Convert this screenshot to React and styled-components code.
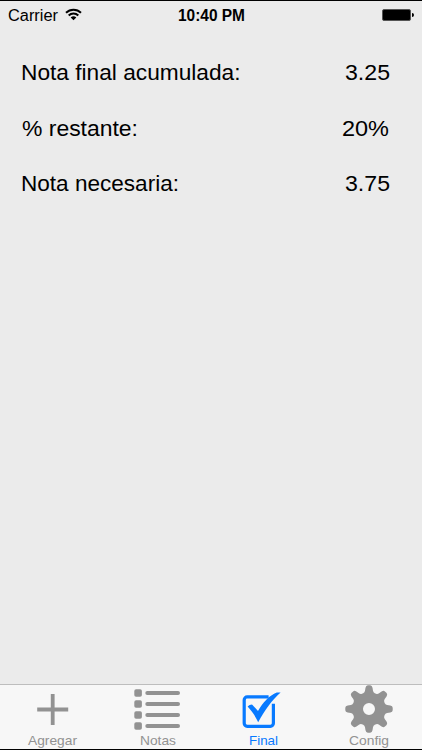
import React from "react";
import styled, { createGlobalStyle } from "styled-components";

const rows = [
  { label: "Nota final acumulada:", value: "3.25", labelWidth: 219.5, valueWidth: 45 },
  { label: "% restante:", value: "20%", labelWidth: 116, valueWidth: 47, inset: 1 },
  { label: "Nota necesaria:", value: "3.75", labelWidth: 158, valueWidth: 45 },
];

// one tooth with both flanks, turned eight times
const gearPath = () => {
  const parts = [];
  for (let i = 0; i < 8; i++) {
    const a = (i * Math.PI) / 4;
    const p = (x, y) =>
      `${(24 + x * Math.cos(a) - y * Math.sin(a)).toFixed(2)} ${(24 + x * Math.sin(a) + y * Math.cos(a)).toFixed(2)}`;
    parts.push(
      `${i === 0 ? "M" : "L"}${p(-5.8, -15.8)} Q${p(-4.3, -16.6)} ${p(-4, -18.2)} L${p(-3.5, -21.3)} Q${p(-3, -23.6)} ${p(-1.2, -23.7)} L${p(1.2, -23.7)} Q${p(3, -23.6)} ${p(3.5, -21.3)} L${p(4, -18.2)} Q${p(4.3, -16.6)} ${p(5.8, -15.8)}`
    );
  }
  return `${parts.join(" ")} Z M18 24 a6 6 0 1 0 12 0 a6 6 0 1 0 -12 0 Z`;
};

const PlusIcon = () => (
  <svg width="48" height="48" viewBox="0 0 48 48">
    <path d="M23.7 9v31M8.2 24.5h31" stroke="currentColor" strokeWidth="3.8" />
  </svg>
);

const ListIcon = () => (
  <svg width="48" height="48" viewBox="0 0 48 48" fill="currentColor">
    {[4.3, 15.3, 26.3, 37.3].map((y) => (
      <g key={y}>
        <rect x="0.3" y={y} width="7.6" height="7.4" rx="1.8" />
        <rect x="11.3" y={y + 1.7} width="34.7" height="4" rx="2" />
      </g>
    ))}
  </svg>
);

const CheckIcon = () => (
  <svg width="48" height="48" viewBox="0 0 48 48">
    <path
      d="M28.6 11.9H7.2a3 3 0 0 0-3 3v23.4a3 3 0 0 0 3 3h23.2a3 3 0 0 0 3-3V18.8"
      fill="none"
      stroke="currentColor"
      strokeWidth="3.2"
    />
    <path
      d="M7.6 21.6Q9.4 19.4 12 19.4L18 26C22.6 17.6 29.4 10.3 36.8 7.5L40.6 7.4C31.8 15 24.9 25 18.2 37.2 15.5 31.4 12 26.2 7.6 21.6Z"
      fill="currentColor"
    />
  </svg>
);

const GearIcon = () => (
  <svg width="48" height="48" viewBox="0 0 48 48">
    <path d={gearPath()} fill="currentColor" fillRule="evenodd" />
  </svg>
);

const tabs = [
  { name: "Agregar", icon: <PlusIcon />, width: 49 },
  { name: "Notas", icon: <ListIcon />, width: 36 },
  { name: "Final", icon: <CheckIcon />, width: 29, active: true },
  { name: "Config", icon: <GearIcon />, width: 40 },
];

// text kept at a fixed advance width
const Fitted = ({ children, width, size, weight }) => (
  <TextSvg width={width} height={size * 1.3}>
    <text
      x="0"
      y={size}
      fontSize={size}
      fontWeight={weight || 400}
      textLength={width}
      lengthAdjust="spacingAndGlyphs"
      fill="currentColor"
    >
      {children}
    </text>
  </TextSvg>
);

const App = () => {
  return (
    <Screen>
      <GlobalStyle />
      <StatusBar>
        <Carrier>
          <Fitted width={50} size={15.6}>Carrier</Fitted>
          <svg width="17" height="13" viewBox="0 0 17 13">
            <g fill="none" stroke="#000" strokeWidth="2">
              <path d="M1 4.7a10.7 10.7 0 0 1 15 0" />
              <path d="M3.7 7.5a6.8 6.8 0 0 1 9.6 0" />
            </g>
            <path d="M5.7 9.5a4 4 0 0 1 5.6 0L8.5 12.3Z" />
          </svg>
        </Carrier>
        <Fitted width={67} size={15.6} weight={700}>10:40 PM</Fitted>
        <Power>
          <Battery />
          <BatteryTip />
        </Power>
      </StatusBar>
      <Content>
        {rows.map((row) => (
          <Row key={row.label} $inset={row.inset}>
            <Fitted width={row.labelWidth} size={22.4}>{row.label}</Fitted>
            <Fitted width={row.valueWidth} size={22.4}>{row.value}</Fitted>
          </Row>
        ))}
      </Content>
      <TabBar>
        {tabs.map((tab) => (
          <Tab key={tab.name} $active={tab.active}>
            {tab.icon}
            <Fitted width={tab.width} size={13}>{tab.name}</Fitted>
          </Tab>
        ))}
      </TabBar>
    </Screen>
  );
};

export default App;

const GlobalStyle = createGlobalStyle`
  body {
    margin: 0;
  }
  * {
    box-sizing: border-box;
  }
`;
const Screen = styled.div`
  width: 422px;
  height: 750px;
  display: flex;
  flex-direction: column;
  background: #ebebeb;
  color: #000;
  border-top: 1px solid #000;
  border-bottom: 1px solid #000;
  font-family: "Liberation Sans", Arial, sans-serif;
  overflow: hidden;
`;
const TextSvg = styled.svg`
  display: block;
  overflow: visible;
  flex-shrink: 0;
`;
const StatusBar = styled.div`
  display: grid;
  grid-template-columns: 1fr 67px 1fr;
  height: 26px;
  padding: 3.5px 8px 0;
`;
const Carrier = styled.div`
  display: flex;
  align-items: flex-start;
  gap: 7px;

  > svg:last-child {
    margin-top: 3px;
  }
`;
const Power = styled.div`
  display: flex;
  justify-content: flex-end;
  align-items: center;
  height: 20px;
`;
const Battery = styled.div`
  width: 29px;
  height: 12px;
  background: #000;
  border: 1px solid #555;
  border-radius: 2px;
`;
const BatteryTip = styled.div`
  width: 2px;
  height: 4px;
  margin-left: 1px;
  background: #000;
  border-radius: 0 2px 2px 0;
`;
const Content = styled.div`
  flex: 1;
  padding: 31px 32px 0 21px;
`;
const Row = styled.div`
  display: flex;
  justify-content: space-between;
  height: 55.5px;
  padding: 0 ${({ $inset }) => $inset || 0}px;
`;
const TabBar = styled.div`
  display: grid;
  grid-template-columns: repeat(4, 1fr);
  height: 65px;
  background: #f7f7f7;
  border-top: 1px solid #bdbdbd;
`;
const Tab = styled.div`
  display: flex;
  flex-direction: column;
  align-items: center;
  color: ${({ $active }) => ($active ? "#087aff" : "#929292")};

  > svg:last-child {
    margin-top: -1px;
  }
`;
